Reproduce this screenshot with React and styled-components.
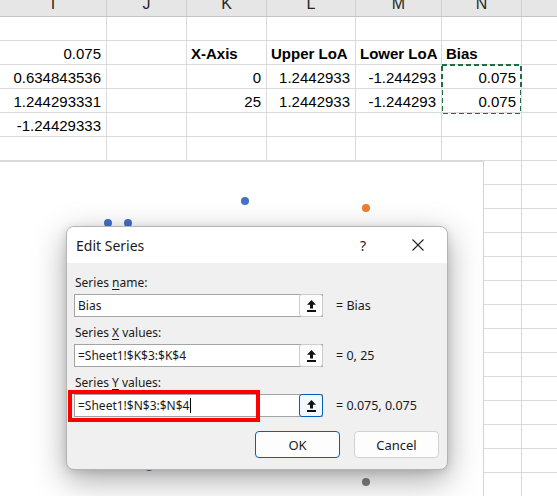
import styled, { createGlobalStyle } from "styled-components";

const GlobalStyle = createGlobalStyle`
  html, body {
    margin: 0;
    padding: 0;
    background: #ffffff;
    overflow: hidden;
  }
  * {
    box-sizing: border-box;
  }
`;

const Page = styled.div`
  position: relative;
  width: 557px;
  height: 496px;
  overflow: hidden;
  font-family: "Liberation Sans", Arial, sans-serif;
  color: #000;
`;

const Grid = styled.div`
  display: grid;
  grid-template-columns: 107px 80px 80px 89px 86px 80px 60px;
  grid-template-rows: 17px repeat(20, 24px);
`;

const HeadCell = styled.div`
  background: #e6e6e6;
  border-right: 1px solid #cfcfcf;
  border-bottom: 1px solid #c4c4c4;
  display: flex;
  align-items: flex-end;
  justify-content: center;
  padding-bottom: 4px;
  font-size: 16px;
  line-height: 1;
  color: #262626;
  overflow: hidden;
`;

const Cell = styled.div`
  position: relative;
  border-right: 1px solid #dadada;
  border-bottom: 1px solid #dadada;
  display: flex;
  align-items: center;
  justify-content: ${(p) => (p.$num ? "flex-end" : "flex-start")};
  padding: 1px 5px 0 4px;
  font-size: 15px;
  font-weight: ${(p) => (p.$bold ? 700 : 400)};
  white-space: nowrap;
`;

const Marquee = styled.svg`
  position: absolute;
  left: -1px;
  top: -1px;
  width: 81px;
  height: 50px;
  overflow: visible;
`;

const Chart = styled.div`
  position: absolute;
  left: 0;
  top: 161px;
  width: 484px;
  height: 340px;
  background: #ffffff;
  border-top: 1px solid #dadada;
  border-right: 1px solid #d4d4d4;
`;

const Dialog = styled.div`
  position: absolute;
  left: 66px;
  top: 226px;
  width: 382px;
  height: 244px;
  border: 1px solid #b4b4b4;
  border-radius: 8px;
  background: #f0f0f0;
  overflow: hidden;
  box-shadow: 0 10px 32px rgba(0, 0, 0, 0.34), 0 2px 8px rgba(0, 0, 0, 0.12);
  font-family: "Noto Sans", "Open Sans", sans-serif;
  color: #1a1a1a;
`;

const TitleBar = styled.div`
  height: 36px;
  background: #ffffff;
  display: flex;
  align-items: center;
  padding: 0 23px 0 9px;
`;

const Title = styled.div`
  flex: 1;
  font-size: 14px;
`;

const HelpMark = styled.span`
  font-size: 14px;
  margin-right: 46px;
  color: #222;
`;

const Body = styled.div`
  padding: 11px 7px 0 7px;
  display: flex;
  flex-direction: column;
  gap: 7px;
`;

const Field = styled.div`
  display: flex;
  flex-direction: column;
  gap: 2px;
`;

const Label = styled.div`
  font-size: 12px;
  line-height: 18px;
  padding-left: 1px;
`;

const Mnemonic = styled.span`
  text-decoration: underline;
  text-underline-offset: 2px;
`;

const FieldRow = styled.div`
  position: relative;
  display: flex;
  align-items: center;
`;

const InputBox = styled.div`
  width: 249px;
  height: 23px;
  background: #ffffff;
  border: 1px solid #a3a3a3;
  display: flex;
  align-items: center;
`;

const InputText = styled.div`
  flex: 1;
  font-size: 12px;
  padding-left: 3px;
  display: flex;
  align-items: center;
  white-space: nowrap;
`;

const Caret = styled.span`
  display: inline-block;
  width: 1px;
  height: 15px;
  background: #000;
  margin-left: 1px;
`;

const PickButton = styled.div`
  width: 24px;
  height: 23px;
  margin-right: -1px;
  border: 1px solid ${(p) => (p.$focus ? "#005fb8" : "#cdcdcd")};
  border-radius: 3px;
  background: ${(p) => (p.$focus ? "#f3f8fd" : "#fdfdfd")};
  display: flex;
  align-items: center;
  justify-content: center;
`;

const Result = styled.div`
  margin-left: 13px;
  font-size: 12.5px;
`;

const Highlight = styled.div`
  position: absolute;
  left: -6px;
  top: -4px;
  width: 192px;
  height: 32px;
  border: 4px solid #ff0000;
  pointer-events: none;
`;

const Buttons = styled.div`
  display: flex;
  justify-content: flex-end;
  gap: 14px;
  padding: 7px 1px 0 0;
`;

const Button = styled.div`
  width: 85px;
  height: 27px;
  border-radius: 4px;
  background: #fdfdfd;
  border: 1px solid ${(p) => (p.$primary ? "#005fb8" : "#d2d2d2")};
  display: flex;
  align-items: center;
  justify-content: center;
  font-size: 13px;
`;

const UploadIcon = () => (
  <svg width="9" height="12" viewBox="0 0 9 12">
    <polygon points="4.5,0 0,4.8 3,4.8 3,8.5 6,8.5 6,4.8 9,4.8" fill="#111" />
    <rect x="0" y="10" width="9" height="2" fill="#111" />
  </svg>
);

const CloseIcon = () => (
  <svg width="12" height="12" viewBox="0 0 12 12">
    <path d="M0.5 0.5 L11.5 11.5 M11.5 0.5 L0.5 11.5" stroke="#222" strokeWidth="1.1" />
  </svg>
);

const headers = ["I", "J", "K", "L", "M", "N", ""];

const rows = [
  [],
  [
    { t: "0.075", num: true },
    null,
    { t: "X-Axis", bold: true },
    { t: "Upper LoA", bold: true },
    { t: "Lower LoA", bold: true },
    { t: "Bias", bold: true },
  ],
  [
    { t: "0.634843536", num: true },
    null,
    { t: "0", num: true },
    { t: "1.2442933", num: true },
    { t: "-1.244293", num: true },
    { t: "0.075", num: true, marquee: true },
  ],
  [
    { t: "1.244293331", num: true },
    null,
    { t: "25", num: true },
    { t: "1.2442933", num: true },
    { t: "-1.244293", num: true },
    { t: "0.075", num: true },
  ],
  [{ t: "-1.24429333", num: true }],
];

// chart markers, relative to the chart's top-left corner
const dots = [
  { x: 108, y: 61, c: "#4472c4" },
  { x: 128, y: 61, c: "#4472c4" },
  { x: 245, y: 39, c: "#4472c4" },
  { x: 366, y: 46, c: "#ed7d31" },
  { x: 149, y: 305, c: "#4472c4" },
  { x: 366, y: 320, c: "#7f7f7f" },
];

const fields = [
  { pre: "Series ", key: "n", post: "ame:", value: "Bias", result: "= Bias" },
  { pre: "Series ", key: "X", post: " values:", value: "=Sheet1!$K$3:$K$4", result: "= 0, 25" },
  {
    pre: "Series ",
    key: "Y",
    post: " values:",
    value: "=Sheet1!$N$3:$N$4",
    result: "= 0.075, 0.075",
    active: true,
  },
];

export default function App() {
  const body = [];
  for (let r = 0; r < 20; r++) {
    const row = rows[r] || [];
    for (let c = 0; c < 7; c++) {
      const cell = row[c];
      body.push(
        <Cell key={`${r}-${c}`} $num={cell?.num} $bold={cell?.bold}>
          {cell?.t}
          {cell?.marquee && (
            <Marquee viewBox="0 0 81 50">
              <rect
                x="1"
                y="1"
                width="79"
                height="48"
                fill="none"
                stroke="#1f6e43"
                strokeWidth="2"
                strokeDasharray="5 3"
              />
            </Marquee>
          )}
        </Cell>
      );
    }
  }

  return (
    <Page>
      <GlobalStyle />
      <Grid>
        {headers.map((h, i) => (
          <HeadCell key={i}>{h}</HeadCell>
        ))}
        {body}
      </Grid>

      <Chart>
        <svg width="484" height="340">
          {dots.map((d, i) => (
            <circle key={i} cx={d.x} cy={d.y} r="4" fill={d.c} />
          ))}
        </svg>
      </Chart>

      <Dialog>
        <TitleBar>
          <Title>Edit Series</Title>
          <HelpMark>?</HelpMark>
          <CloseIcon />
        </TitleBar>
        <Body>
          {fields.map((f) => (
            <Field key={f.key}>
              <Label>
                {f.pre}
                <Mnemonic>{f.key}</Mnemonic>
                {f.post}
              </Label>
              <FieldRow>
                <InputBox>
                  <InputText>
                    {f.value}
                    {f.active && <Caret />}
                  </InputText>
                  <PickButton $focus={f.active}>
                    <UploadIcon />
                  </PickButton>
                </InputBox>
                <Result>{f.result}</Result>
                {f.active && <Highlight />}
              </FieldRow>
            </Field>
          ))}
          <Buttons>
            <Button $primary>OK</Button>
            <Button>Cancel</Button>
          </Buttons>
        </Body>
      </Dialog>
    </Page>
  );
}
